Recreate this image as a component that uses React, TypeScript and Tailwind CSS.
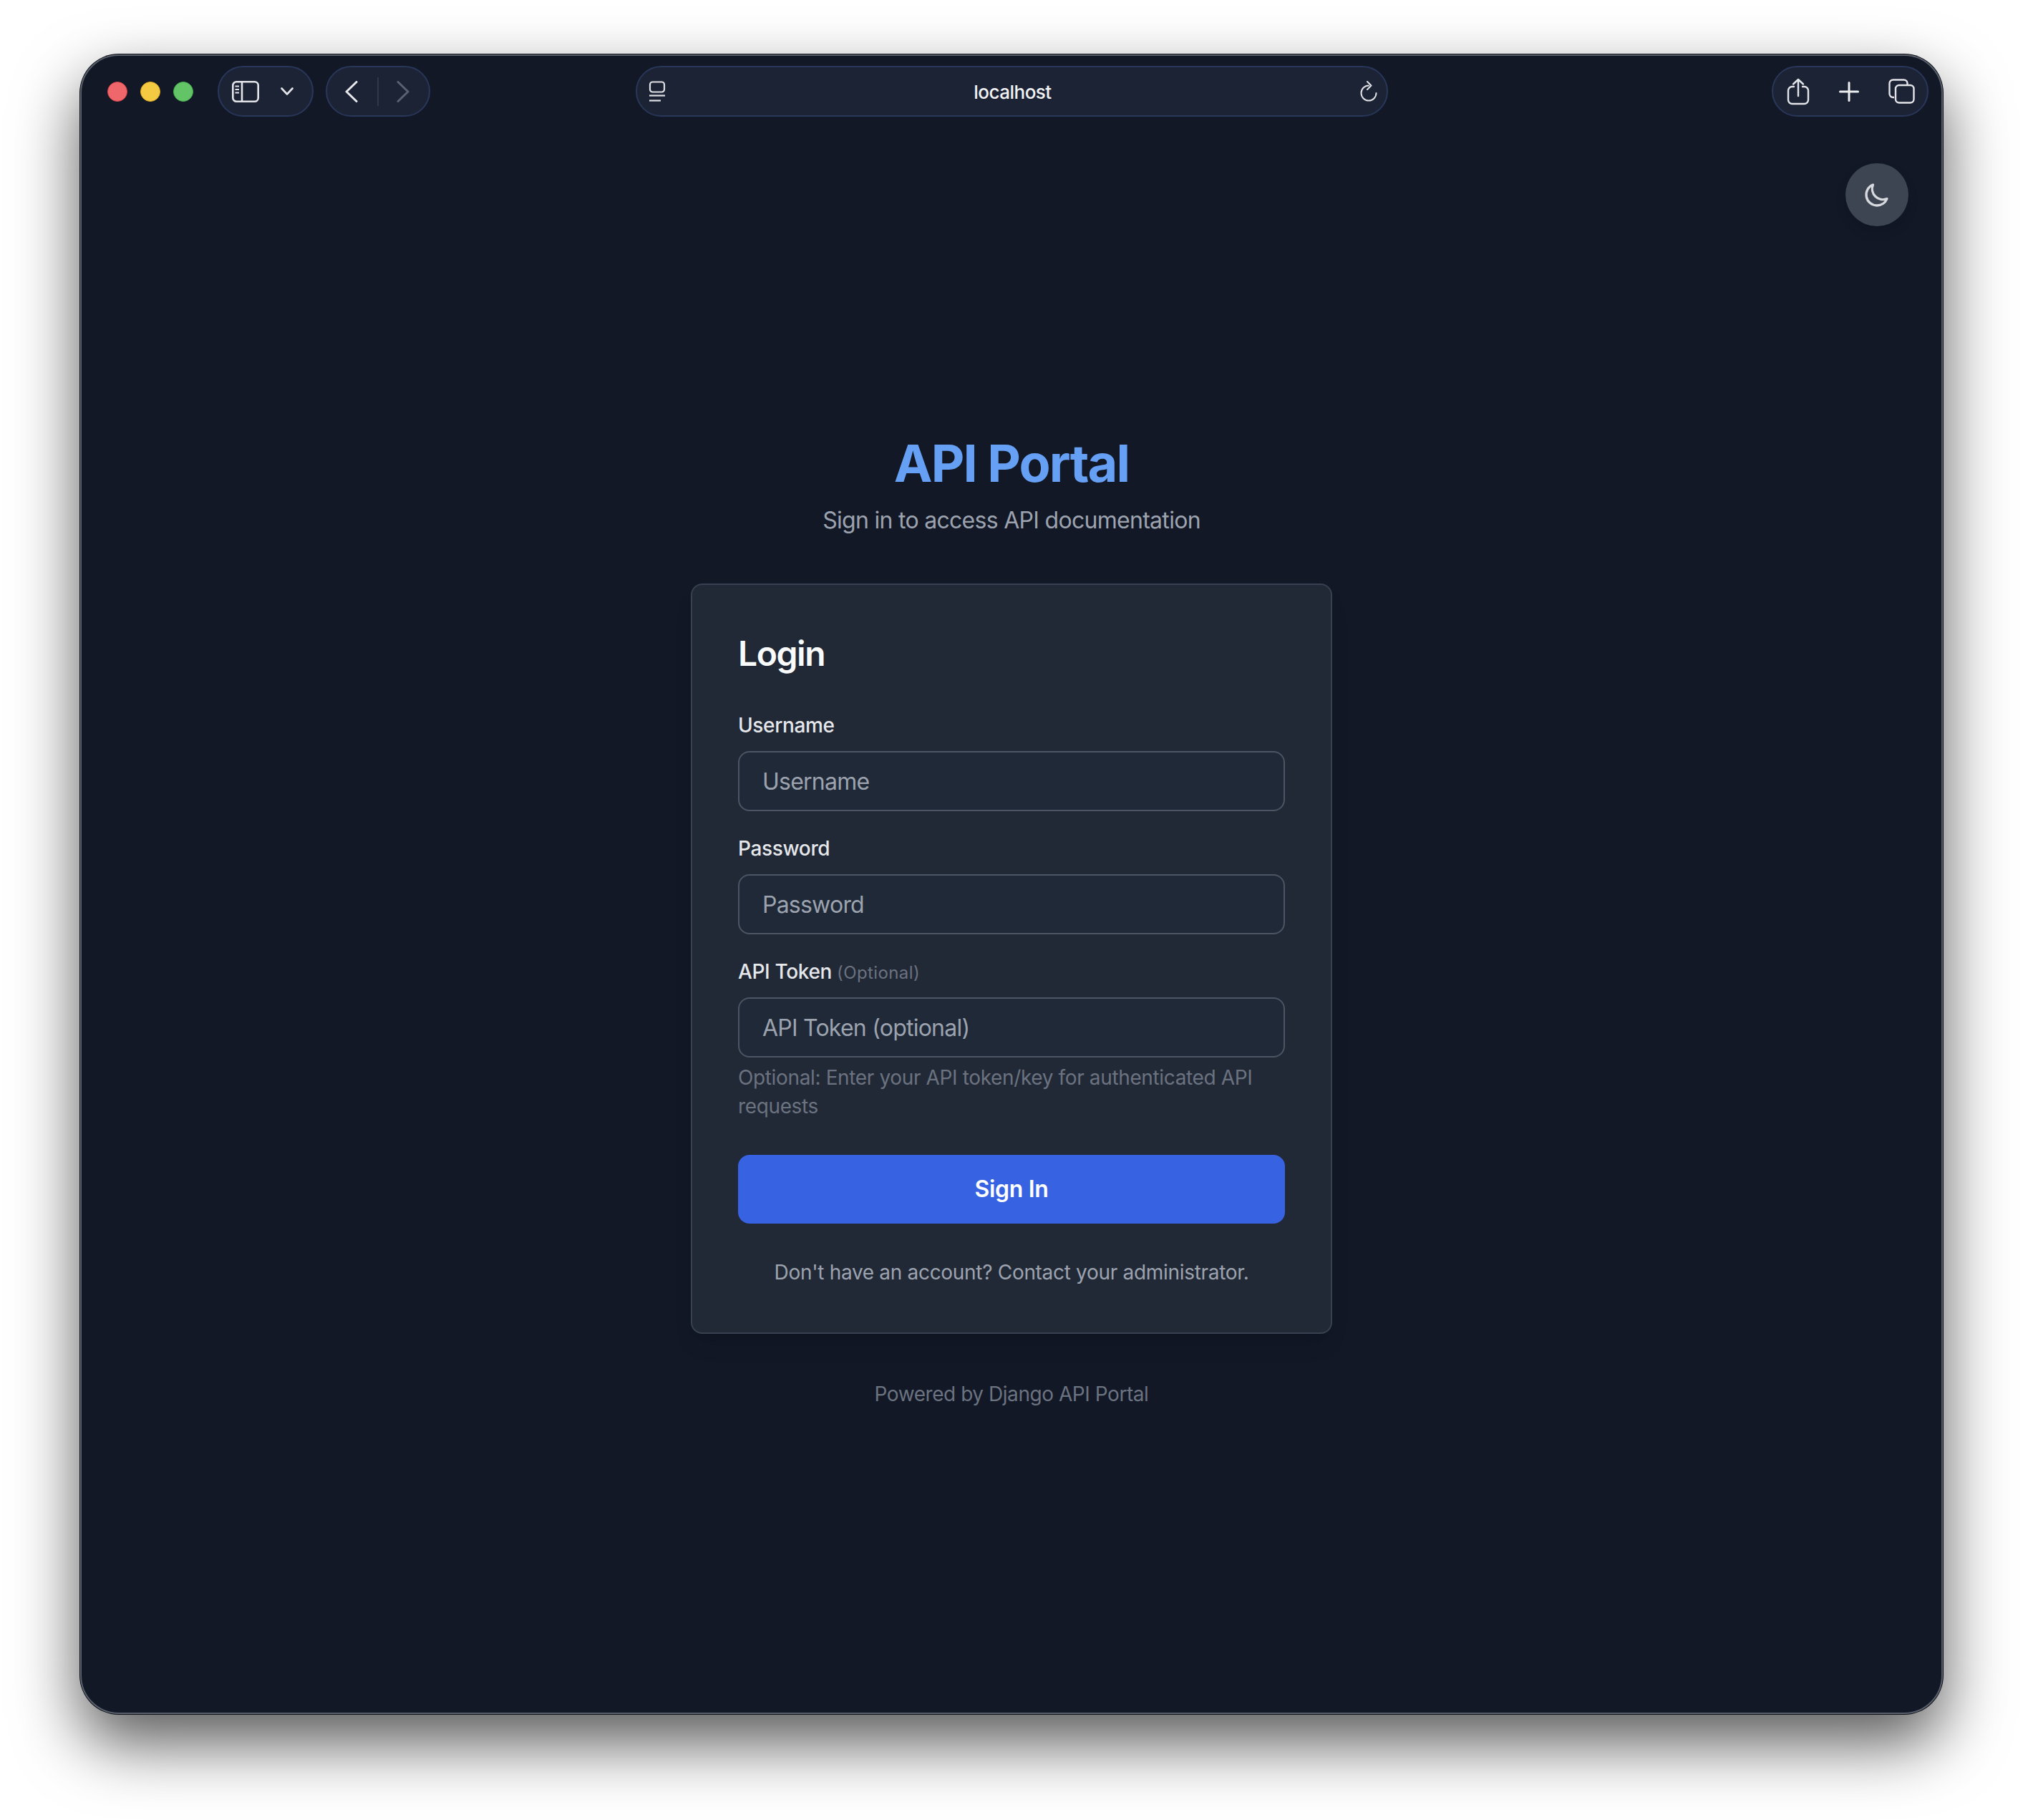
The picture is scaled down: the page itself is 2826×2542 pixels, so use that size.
import React from 'react';

const pill = 'h-[71px] rounded-[36px] border-2 border-[#28375a] bg-[#1c2335] flex items-center';

const Field: React.FC<{ label: string; placeholder: string; type?: string; optional?: boolean }> = ({ label, placeholder, type = 'text', optional }) => (
  <div>
    <label className="block text-[28px] leading-[40px] font-medium tracking-[-0.013em] text-[#e5e7eb] mb-4">
      {label}
      {optional && <span className="text-[24px] leading-none font-normal tracking-[0.016em] text-[#6b7280]"> (Optional)</span>}
    </label>
    <input
      type={type}
      placeholder={placeholder}
      className="block w-full h-[84px] px-8 rounded-2xl border-2 border-[#4b5563] bg-[#1f2937] text-[32px] tracking-[-0.024em] text-white placeholder:text-[#9ca3af] outline-none"
    />
  </div>
);

const App: React.FC = () => {
  return (
    <div className="w-[2826px] h-[2542px] bg-white pl-[112px] pt-[76px] font-['Inter',sans-serif]">
      <div className="relative w-[2602px] h-[2318px] rounded-[54px] border-2 border-[#59606c] bg-[#121826] shadow-[0_0_0_1px_#0b0e14,0_40px_90px_rgba(0,0,0,0.66)]">
        {/* browser toolbar */}
        <div className="grid grid-cols-[1fr_1051px_1fr] items-center pt-[14px] px-[18px]">
          <div className="flex items-center pl-[18px]">
            <div className="flex gap-[18px] mr-[34px]">
              <span className="w-7 h-7 rounded-full bg-[#f0676b] border border-[#d8474c]" />
              <span className="w-7 h-7 rounded-full bg-[#f4ca42] border border-[#dfae2a]" />
              <span className="w-7 h-7 rounded-full bg-[#62c466] border border-[#4aae50]" />
            </div>
            <div className={`${pill} w-[134px] pl-[18px] gap-[30px]`}>
              <svg width="38" height="30" viewBox="0 0 38 30" fill="none" stroke="#e2e4e8" strokeWidth="2.6">
                <rect x="1.3" y="1.3" width="35.4" height="27.4" rx="5" />
                <path d="M14 1.3v27.4" />
                <path d="M4.5 7.5h5.5M4.5 12h5.5M4.5 16.5h5.5" strokeWidth="2" />
              </svg>
              <svg width="18" height="11" viewBox="0 0 18 11" fill="none" stroke="#e2e4e8" strokeWidth="2.6" strokeLinecap="round" strokeLinejoin="round">
                <path d="M1.5 1.5 9 9.5l7.5-8" />
              </svg>
            </div>
            <div className={`${pill} w-[146px] ml-[17px]`}>
              <svg className="ml-[25px]" width="18" height="30" viewBox="0 0 18 30" fill="none" stroke="#e8e9ec" strokeWidth="3" strokeLinecap="round" strokeLinejoin="round">
                <path d="M16 1.5 2 15l14 13.5" />
              </svg>
              <span className="ml-[27px] w-0.5 h-10 bg-[#30394b]" />
              <svg className="ml-[25px]" width="18" height="30" viewBox="0 0 18 30" fill="none" stroke="#5b6170" strokeWidth="3" strokeLinecap="round" strokeLinejoin="round">
                <path d="M2 1.5 16 15 2 28.5" />
              </svg>
            </div>
          </div>
          <div className={`${pill} justify-between pl-4 pr-[11px] rounded-[30px]`}>
            <svg width="24" height="30" viewBox="0 0 24 30" fill="none" stroke="#dfe1e5" strokeWidth="2.2">
              <rect x="2" y="1.5" width="20" height="14" rx="3.5" />
              <path d="M1 20.5h22" />
              <path d="M1 27.5h16" />
            </svg>
            <span className="pt-0.5 text-[26px] leading-none font-medium tracking-[-0.02em] text-[#f1f2f4]">localhost</span>
            <svg width="26" height="30" viewBox="0 0 26 30" fill="none" stroke="#dfe1e5" strokeWidth="2" strokeLinecap="round" strokeLinejoin="round">
              <path d="M13 6.500a10.500 10.500 0 1 0 10.500 10.500" />
              <path d="M11 1l5.500 5.500L11 12" />
            </svg>
          </div>
          <div className="flex justify-end">
            <div className={`${pill} w-[219px] pl-[19px] gap-[41px]`}>
              <svg width="32" height="38" viewBox="0 0 32 38" fill="none" stroke="#e2e4e8" strokeWidth="2.4" strokeLinecap="round" strokeLinejoin="round">
                <path d="M10 12H7.500a5.500 5.500 0 0 0-5.500 5.500v13a5.500 5.500 0 0 0 5.500 5.500h17a5.500 5.500 0 0 0 5.500-5.500v-13a5.500 5.500 0 0 0-5.500-5.500H22" />
                <path d="M16 25V2M9 8.500 16 2l7 6.500" />
              </svg>
              <svg width="28" height="28" viewBox="0 0 28 28" fill="none" stroke="#eceef0" strokeWidth="3" strokeLinecap="round">
                <path d="M14 1.500v25M1.500 14h25" />
              </svg>
              <svg width="37" height="35" viewBox="0 0 37 35" fill="none" stroke="#e2e4e8" strokeWidth="2.4">
                <path d="M8 26H6.500a5 5 0 0 1-5-5V6.500a5 5 0 0 1 5-5h15a5 5 0 0 1 5 5V8" />
                <rect x="10" y="9" width="25.500" height="24.500" rx="5" />
              </svg>
            </div>
          </div>
        </div>

        {/* theme toggle */}
        <button className="absolute top-[150px] right-[46px] w-[88px] h-[88px] rounded-full bg-[#3d4452] flex items-center justify-center shadow-[0_8px_16px_rgba(0,0,0,0.12)]">
          <svg width="40" height="40" viewBox="0 0 24 24" fill="none" stroke="#d6d9de" strokeWidth="2" strokeLinecap="round" strokeLinejoin="round">
            <path d="M20.354 15.354A9 9 0 018.646 3.646 9.003 9.003 0 0012 21a9.003 9.003 0 008.354-5.646z" />
          </svg>
        </button>

        {/* login */}
        <div className="pt-[444px] flex flex-col items-center">
          <h1 className="text-[72px] leading-[80px] font-bold tracking-[-0.025em] text-[#66a0f5]">API Portal</h1>
          <p className="mt-4 text-[32px] leading-[48px] tracking-[-0.022em] text-[#9ca3af]">Sign in to access API documentation</p>

          <div className="mt-16 w-[896px] rounded-2xl border-2 border-[#374151] bg-[#222936] p-16 shadow-[0_20px_30px_-6px_rgba(0,0,0,0.1),0_8px_12px_-8px_rgba(0,0,0,0.1)]">
            <h2 className="text-[48px] leading-[64px] font-semibold tracking-[-0.03em] text-[#f9fafb] mb-12">Login</h2>
            <div className="flex flex-col gap-8">
              <Field label="Username" placeholder="Username" />
              <Field label="Password" placeholder="Password" type="password" />
              <div>
                <Field label="API Token" placeholder="API Token (optional)" optional />
                <p className="mt-2 text-[28px] leading-[40px] tracking-[-0.013em] text-[#6b7280]">Optional: Enter your API token/key for authenticated API requests</p>
              </div>
            </div>
            <button className="mt-12 w-full h-24 rounded-2xl bg-[#3763e3] text-[32px] font-semibold tracking-[-0.01em] text-white">Sign In</button>
            <p className="mt-12 text-center text-[28px] leading-[40px] tracking-[-0.011em] text-[#9ca3af]">Don't have an account? Contact your administrator.</p>
          </div>

          <p className="mt-16 text-[28px] leading-[40px] tracking-[-0.016em] text-[#6b7280]">Powered by Django API Portal</p>
        </div>
      </div>
    </div>
  );
};

export default App;
